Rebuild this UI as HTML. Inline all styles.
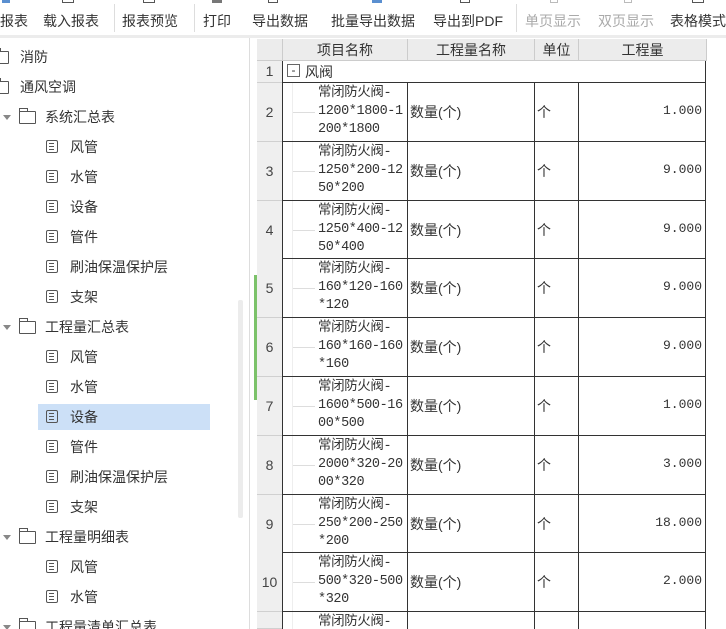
<!DOCTYPE html>
<html style="width:726px;height:629px;overflow:hidden"><head><meta charset="utf-8"><style>
*{margin:0;padding:0;box-sizing:border-box}
body{width:726px;height:629px;overflow:hidden;background:#fff;font-family:"Liberation Sans","Noto Sans CJK SC",sans-serif;color:#333;position:relative}
.a{position:absolute;white-space:nowrap}
.tb{font-size:14px;top:11px;color:#333}
.dis{color:#aaa}
.ti{position:absolute;font-size:14px;height:30px;line-height:30px}
.doc{position:absolute;width:12px;height:13px;border:1.3px solid #555;border-radius:2px}
.doc:after{content:"";position:absolute;left:2px;top:2px;width:5px;height:5px;border-top:1.2px solid #555;border-bottom:1.2px solid #555}
.doc:before{content:"";position:absolute;left:2px;top:4.5px;width:5px;border-top:1.2px solid #555}
.fold{position:absolute;width:17px;height:13px;border:1.3px solid #555;border-radius:1px}
.fold:before{content:"";position:absolute;left:-1px;top:-4px;width:7px;height:3px;border:1.3px solid #555;border-bottom:none}
.arr{position:absolute;width:0;height:0;border-left:4px solid transparent;border-right:4px solid transparent;border-top:5px solid #888}
.cell{position:absolute;font-size:14px;font-family:"Liberation Sans","Noto Sans CJK SC",sans-serif}
.hl{position:absolute;background:#333}
.rn{position:absolute;left:257px;width:25px;background:#efefef;border-bottom:1px solid #d0d0d0;font-size:14px;text-align:center;color:#444}
.nm{position:absolute;left:318px;font-size:13.5px;line-height:18px;font-family:"Liberation Mono","Noto Sans CJK SC",monospace;letter-spacing:-0.4px}
</style></head><body>
<div class="a tb" style="left:0">报表</div>
<div class="a tb" style="left:43px">载入报表</div>
<div class="a tb" style="left:122px">报表预览</div>
<div class="a tb" style="left:203px">打印</div>
<div class="a tb" style="left:252px">导出数据</div>
<div class="a tb" style="left:331px">批量导出数据</div>
<div class="a tb" style="left:433px">导出到PDF</div>
<div class="a tb dis" style="left:525px">单页显示</div>
<div class="a tb dis" style="left:598px">双页显示</div>
<div class="a tb" style="left:670px">表格模式</div>
<div class="a" style="left:114px;top:4px;width:1px;height:28px;background:#ddd"></div>
<div class="a" style="left:194px;top:4px;width:1px;height:28px;background:#ddd"></div>
<div class="a" style="left:516px;top:4px;width:1px;height:28px;background:#ddd"></div>
<div class="a" style="left:0;top:35px;width:726px;height:3px;background:#ececec"></div>
<div class="a" style="left:2px;top:0;width:8px;height:3px;background:#5a8fd0"></div>
<div class="a" style="left:62px;top:0;width:12px;height:3px;border:1px solid #555;border-top:none"></div>
<div class="a" style="left:143px;top:0;width:12px;height:3px;border:1px solid #555;border-top:none"></div>
<div class="a" style="left:212px;top:0;width:10px;height:3px;background:#777"></div>
<div class="a" style="left:268px;top:0;width:10px;height:3px;border:1px solid #555;border-top:none"></div>
<div class="a" style="left:372px;top:0;width:10px;height:3px;background:#5a8fd0"></div>
<div class="a" style="left:460px;top:0;width:10px;height:3px;border:1px solid #555;border-top:none"></div>
<div class="a" style="left:550px;top:0;width:8px;height:3px;border:1px solid #bbb;border-top:none"></div>
<div class="a" style="left:624px;top:0;width:8px;height:3px;border:1px solid #bbb;border-top:none"></div>
<div class="a" style="left:692px;top:0;width:12px;height:3px;border:1px solid #555;border-top:none"></div>

<div class="a" style="left:249px;top:38px;width:1px;height:591px;background:#ddd"></div>
<div class="a" style="left:238px;top:300px;width:5px;height:218px;background:#ececec;border-radius:2px"></div>
<div class="a" style="left:38px;top:404px;width:172px;height:26px;background:#cce0f7"></div>

<div class="fold" style="left:-8px;top:51px"></div><div class="ti" style="left:20px;top:42px">消防</div>
<div class="fold" style="left:-8px;top:81px"></div><div class="ti" style="left:20px;top:72px">通风空调</div>

<div class="arr" style="left:3px;top:115px"></div><div class="fold" style="left:19px;top:111px"></div><div class="ti" style="left:45px;top:102px">系统汇总表</div>
<div class="doc" style="left:46px;top:140px"></div><div class="ti" style="left:70px;top:132px">风管</div>
<div class="doc" style="left:46px;top:170px"></div><div class="ti" style="left:70px;top:162px">水管</div>
<div class="doc" style="left:46px;top:200px"></div><div class="ti" style="left:70px;top:192px">设备</div>
<div class="doc" style="left:46px;top:230px"></div><div class="ti" style="left:70px;top:222px">管件</div>
<div class="doc" style="left:46px;top:260px"></div><div class="ti" style="left:70px;top:252px">刷油保温保护层</div>
<div class="doc" style="left:46px;top:290px"></div><div class="ti" style="left:70px;top:282px">支架</div>
<div class="arr" style="left:3px;top:325px"></div><div class="fold" style="left:19px;top:321px"></div><div class="ti" style="left:45px;top:312px">工程量汇总表</div>
<div class="doc" style="left:46px;top:350px"></div><div class="ti" style="left:70px;top:342px">风管</div>
<div class="doc" style="left:46px;top:380px"></div><div class="ti" style="left:70px;top:372px">水管</div>
<div class="doc" style="left:46px;top:410px"></div><div class="ti" style="left:70px;top:402px">设备</div>
<div class="doc" style="left:46px;top:440px"></div><div class="ti" style="left:70px;top:432px">管件</div>
<div class="doc" style="left:46px;top:470px"></div><div class="ti" style="left:70px;top:462px">刷油保温保护层</div>
<div class="doc" style="left:46px;top:500px"></div><div class="ti" style="left:70px;top:492px">支架</div>
<div class="arr" style="left:3px;top:535px"></div><div class="fold" style="left:19px;top:531px"></div><div class="ti" style="left:45px;top:522px">工程量明细表</div>
<div class="doc" style="left:46px;top:560px"></div><div class="ti" style="left:70px;top:552px">风管</div>
<div class="doc" style="left:46px;top:590px"></div><div class="ti" style="left:70px;top:582px">水管</div>
<div class="arr" style="left:3px;top:625px"></div><div class="fold" style="left:19px;top:621px"></div><div class="ti" style="left:45px;top:612px">工程量清单汇总表</div>

<div class="a" style="left:254px;top:275px;width:5px;height:125px;background:#7cc26a"></div>
<div class="a" style="left:257px;top:39px;width:450px;height:22px;background:#ececec;border-bottom:1px solid #ccc"></div>
<div class="a" style="left:282px;top:39px;width:1px;height:22px;background:#ccc"></div>
<div class="a" style="left:407px;top:39px;width:1px;height:22px;background:#ccc"></div>
<div class="a" style="left:534px;top:39px;width:1px;height:22px;background:#ccc"></div>
<div class="a" style="left:578px;top:39px;width:1px;height:22px;background:#ccc"></div>
<div class="a" style="left:706px;top:39px;width:1px;height:22px;background:#ccc"></div>
<div class="cell" style="left:283px;top:40px;width:124px;text-align:center">项目名称</div>
<div class="cell" style="left:408px;top:40px;width:126px;text-align:center">工程量名称</div>
<div class="cell" style="left:535px;top:40px;width:43px;text-align:center">单位</div>
<div class="cell" style="left:579px;top:40px;width:127px;text-align:center">工程量</div>

<div class="rn" style="top:61px;height:22px;line-height:21px">1</div>
<div class="a" style="left:287px;top:64px;width:13px;height:13px;border:1px solid #666;font-size:12px;line-height:10px;text-align:center">-</div>
<div class="cell" style="left:305px;top:62px">风阀</div>
<div class="a" style="left:282px;top:61px;width:1px;height:568px;background:#333"></div>
<div class="a" style="left:705px;top:61px;width:1px;height:568px;background:#333"></div>
<div class="a" style="left:407px;top:83px;width:1px;height:546px;background:#333"></div>
<div class="a" style="left:534px;top:83px;width:1px;height:546px;background:#333"></div>
<div class="a" style="left:578px;top:83px;width:1px;height:546px;background:#333"></div>
<div class="a" style="left:292px;top:83px;width:1px;height:546px;background:#eee"></div>

<div id="rows"></div>
<script>
var d=[["1200*1800-1","200*1800","1.000"],["1250*200-12","50*200","9.000"],["1250*400-12","50*400","9.000"],["160*120-160","*120","9.000"],["160*160-160","*160","9.000"],["1600*500-16","00*500","1.000"],["2000*320-20","00*320","3.000"],["250*200-250","*200","18.000"],["500*320-500","*320","2.000"],["",""," "]];
var h="";
for(var i=0;i<d.length;i++){var t=Math.round(83+i*58.8);
h+='<div class="hl" style="left:282px;top:'+(t-1)+'px;width:424px;height:1.3px"></div>';
h+='<div class="rn" style="top:'+t+'px;height:'+(i<9?59:17)+'px;line-height:58px">'+(i<9?(i+2):'')+'</div>';
h+='<div class="nm" style="top:'+(t+2)+'px">常闭防火阀-<br>'+d[i][0]+'<br>'+d[i][1]+'</div>';
if(i<9){h+='<div class="a" style="left:293px;top:'+(t+29)+'px;width:22px;height:1px;background:#ddd"></div>';
h+='<div class="cell" style="left:410px;top:'+(t+19)+'px">数量(个)</div>';
h+='<div class="cell" style="left:537px;top:'+(t+19)+'px">个</div>';
h+='<div class="cell" style="left:579px;top:'+(t+20)+'px;width:123px;text-align:right;font-family:\'Liberation Mono\',monospace;font-size:13px">'+d[i][2]+'</div>';}}
document.getElementById("rows").innerHTML=h;
</script>
</body></html>
